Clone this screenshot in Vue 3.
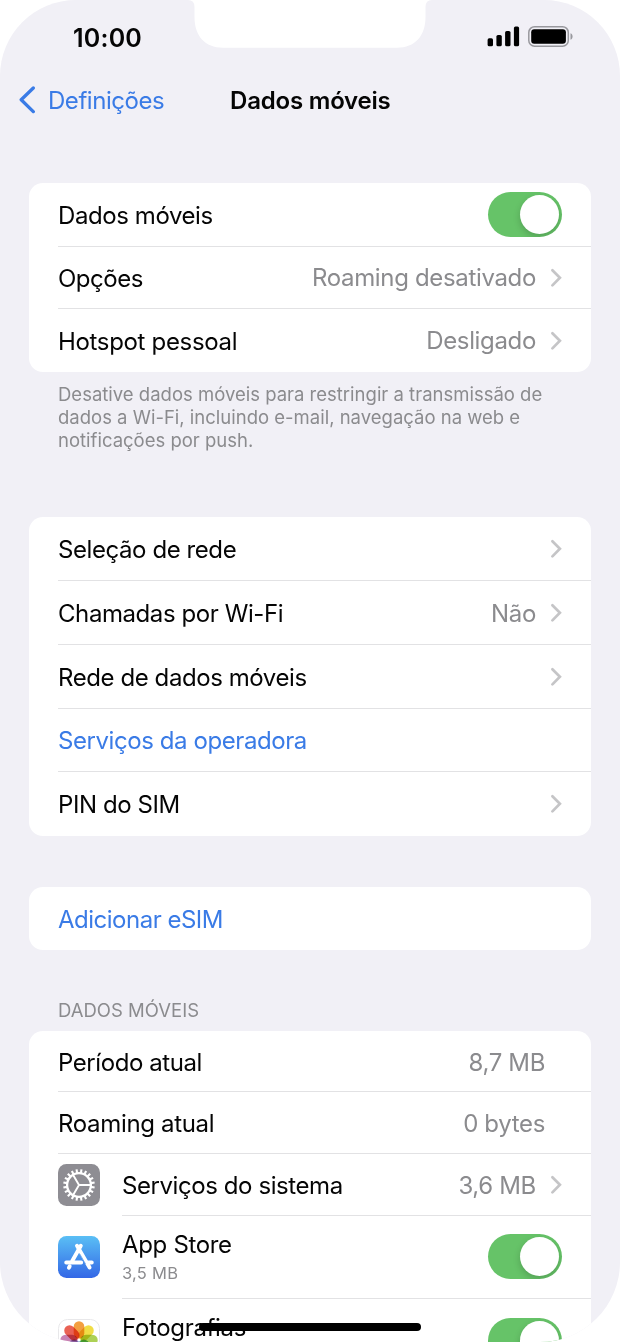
<script setup>
const connection = [
  { label: 'Dados móveis', toggle: true, size: 'h64', fit: 'snug' },
  { label: 'Opções', value: 'Roaming desativado', chevron: true, size: 'h62', fit: 'tight' },
  { label: 'Hotspot pessoal', value: 'Desligado', chevron: true, size: 'h63', fit: 'loose' },
]
const network = [
  { label: 'Seleção de rede', chevron: true, size: 'h64', fit: 'snug' },
  { label: 'Chamadas por Wi-Fi', value: 'Não', chevron: true, size: 'h64', fit: 'snug' },
  { label: 'Rede de dados móveis', chevron: true, size: 'h64', fit: 'snug' },
  { label: 'Serviços da operadora', link: true, size: 'h63', fit: 'snug' },
  { label: 'PIN do SIM', chevron: true, size: 'h64', fit: 'snug' },
]
const esim = [{ label: 'Adicionar eSIM', link: true, size: 'h63', fit: 'tight' }]
const usage = [
  { label: 'Período atual', value: '8,7 MB', size: 'h61', fit: 'snug' },
  { label: 'Roaming atual', value: '0 bytes', size: 'h62', fit: 'loose' },
  { label: 'Serviços do sistema', value: '3,6 MB', chevron: true, icon: 'gear', size: 'h62', fit: 'snug' },
  { label: 'App Store', sub: '3,5 MB', toggle: true, icon: 'store', size: 'h83', fit: 'loose' },
  { label: 'Fotografias', toggle: true, icon: 'photos', size: 'h83', fit: 'loose' },
]
const sections = [
  { id: 'connection', rows: connection, note: ['Desative dados móveis para restringir a transmissão de', 'dados a Wi-Fi, incluindo e-mail, navegação na web e', 'notificações por push.'] },
  { id: 'network', rows: network },
  { id: 'esim', rows: esim },
  { id: 'usage', rows: usage, title: 'DADOS MÓVEIS' },
]
const teeth = Array.from({ length: 20 }, (_, i) => i * 18)
const petals = ['#f39a35', '#f0dc3c', '#a9cf4c', '#5fb98a', '#6a9fd8', '#8f7fc4', '#c67bb0', '#e8584b']
</script>

<template>
  <main class="screen">
    <div class="notch">
      <svg width="250" height="48" viewBox="0 0 250 48"><path d="M3 0Q9.500 0 9.500 7V17C9.500 36 20 47.700 38 47.700H212C230 47.700 240.500 36 240.500 17V7Q240.500 0 247 0Z" fill="#fff" /></svg>
    </div>
    <header class="status">
      <span class="time">10:00</span>
      <svg class="indicators" width="90" height="24" viewBox="0 0 90 24">
        <rect x="0.600" y="14.300" width="5.400" height="8" rx="1.600" />
        <rect x="9.400" y="11" width="5.400" height="11.300" rx="1.600" />
        <rect x="18.100" y="7" width="5.400" height="15.300" rx="1.600" />
        <rect x="26.900" y="2.500" width="5.200" height="19.800" rx="1.600" />
        <rect x="41.800" y="2.700" width="39.500" height="19.500" rx="5.800" fill="none" stroke="#98989d" stroke-width="1.500" />
        <rect x="44.200" y="5.200" width="34.700" height="14.500" rx="3" />
        <path d="M83.500 9.200C86.300 10.400 86.300 14.600 83.500 15.800Z" fill="#98989d" />
      </svg>
    </header>
    <nav class="nav">
      <svg width="18" height="30" viewBox="0 0 18 30"><path d="M16.300 3L4.200 14.800L16.300 26.600" fill="none" stroke="#3a7be6" stroke-width="3.300" stroke-linecap="round" stroke-linejoin="round" /></svg>
      <span class="back">Definições</span>
      <h1>Dados móveis</h1>
    </nav>

    <section v-for="s in sections" :key="s.id" :class="['section', s.id]">
      <h2 v-if="s.title">{{ s.title }}</h2>
      <div class="card">
        <div v-for="r in s.rows" :key="r.label" :class="['row', r.size]">
          <span v-if="r.icon" :class="['icon', r.icon]">
            <svg v-if="r.icon === 'gear'" width="42" height="42" viewBox="0 0 42 42" fill="none" stroke="#fff">
              <rect width="42" height="42" rx="8.500" fill="#8e8d93" stroke="none" />
              <circle cx="21" cy="21" r="11.900" stroke-width="2.300" />
              <path v-for="a in teeth" :key="a" d="M21 5.200V9" stroke-width="2.100" :transform="`rotate(${a + 9} 21 21)`" />
              <path d="M21 21H33M21 21L15 10.800M21 21L15 31.200" stroke-width="1.900" />
            </svg>
            <svg v-else-if="r.icon === 'store'" width="42" height="42" viewBox="0 0 42 42">
              <defs><linearGradient id="sky" x1="0" y1="0" x2="0" y2="1"><stop offset="0" stop-color="#5abff5" /><stop offset="1" stop-color="#3367e6" /></linearGradient></defs>
              <rect width="42" height="42" rx="8.500" fill="url(#sky)" />
              <g fill="none" stroke="#fff" stroke-linecap="round" stroke-width="3.900">
                <path d="M22.800 9.800L14.200 25" />
                <path d="M19 9.800L31.600 31.500" />
                <path d="M8.200 26.500H23.200M30.500 26.500H33.800" />
                <path d="M11.700 30.300L10.900 31.700" />
              </g>
              <path d="M21.500 17.500L27.500 28" stroke="#418be9" stroke-width="0.700" />
            </svg>
            <svg v-else width="42" height="42" viewBox="0 0 42 42">
              <rect x="0.500" y="0.500" width="41" height="41" rx="9" fill="#fff" stroke="#e8e8ea" />
              <g class="petals"><rect v-for="(c, i) in petals" :key="c" x="15.700" y="2.300" width="10.600" height="17.200" rx="5.300" :fill="c" :transform="`rotate(${i * 45} 21 21)`" /></g>
            </svg>
          </span>
          <div class="body">
            <div :class="['text', { lifted: r.icon === 'photos' }]">
              <span :class="['label', r.fit, { link: r.link }]">{{ r.label }}</span>
              <span v-if="r.sub" class="sub">{{ r.sub }}</span>
            </div>
            <span v-if="r.value" :class="['value', { flush: !r.chevron }]">{{ r.value }}</span>
            <svg v-if="r.chevron" class="chevron" width="13" height="20" viewBox="0 0 13 20"><path d="M3.400 2.200L10.900 9.800L3.400 17.400" fill="none" stroke="#c5c5c7" stroke-width="2.700" stroke-linecap="round" stroke-linejoin="miter" /></svg>
            <span v-if="r.toggle" class="toggle"><i></i></span>
          </div>
        </div>
      </div>
      <p v-if="s.note" class="note"><span v-for="line in s.note" :key="line">{{ line }}</span></p>
    </section>
    <div class="home"></div>
  </main>
</template>

<style>
body { margin: 0; background: #fff; }
</style>

<style scoped>
.screen { position: relative; width: 620px; height: 1342px; overflow: hidden; box-sizing: border-box; background: #f1f0f6; border-radius: 76px 76px 80px 80px; font-family: Inter, "Liberation Sans", sans-serif; font-size: 24px; color: #050505; white-space: nowrap; }
.notch { position: absolute; top: 0; left: 185px; height: 48px; }
.notch svg { display: block; }
.status { display: flex; justify-content: space-between; height: 75px; padding: 0 48px 0 73px; }
.time { font-size: 25px; line-height: 30px; padding-top: 23px; font-weight: 600; letter-spacing: .2px; }
.indicators { margin-top: 24px; margin-right: -5px; }
.nav { display: flex; align-items: center; height: 50px; padding-left: 17px; }
.back { width: 182px; margin-left: 13px; color: #3a7be6; font-size: 24px; letter-spacing: -.45px; }
h1 { margin: 0; font-size: 24px; font-weight: 600; letter-spacing: -.2px; }
.section { padding: 0 29px; }
.connection { padding-top: 58px; }
.network { padding-top: 65px; }
.esim { padding-top: 51px; }
.usage { padding-top: 48px; }
.card { background: #fff; border-radius: 14px; overflow: hidden; }
.row { display: flex; align-items: stretch; padding-left: 29px; box-sizing: border-box; }
.h61 { height: 61px; }
.h62 { height: 62px; }
.h63 { height: 63px; }
.h64 { height: 64px; }
.h83 { height: 83px; }
.h83 .body, .h83 .icon { box-sizing: border-box; padding-bottom: 1px; }
.body { flex: 1; display: flex; align-items: center; padding-right: 29px; border-bottom: 1px solid #e2e2e4; }
.row:last-child .body { border-bottom: 0; }
.text { flex: 1; display: flex; flex-direction: column; padding-top: 2px; }
.network .value { padding-top: 2px; }
.h83 .text { padding-top: 0; }
.h83 .lifted { padding: 0 0 25px; }
.label { align-self: flex-start; line-height: 30px; }
.snug { letter-spacing: -.42px; }
.tight { letter-spacing: -.5px; }
.loose { letter-spacing: -.33px; }
.link { color: #3a7be6; }
.value { color: #8b8b8e; line-height: 30px; padding-top: 1px; margin-right: 13px; letter-spacing: -.34px; }
.usage .row:nth-child(-n+2) .text, .usage .row:nth-child(-n+3) .value { padding-top: 3px; }
.usage .row:nth-child(3) .text { padding-top: 3px; }
.value.flush { margin-right: 17px; }
.sub { color: #8b8b8e; font-size: 16.500px; line-height: 22px; margin-top: 2px; letter-spacing: .25px; }
.toggle { width: 74px; height: 45px; border-radius: 23px; background: #66c368; overflow: hidden; }
.toggle i { display: block; width: 39px; height: 39px; margin: 3px 0 0 32px; border-radius: 50%; background: #fff; box-shadow: 0 3px 7px rgba(0, 0, 0, .18); }
.icon { width: 64px; display: flex; align-items: center; }
.store { padding-bottom: 2px !important; }
.icon svg { display: block; }
.petals rect { mix-blend-mode: multiply; opacity: .95; }
.note { display: flex; flex-direction: column; margin: 11px 0 0 29px; font-size: 18.500px; line-height: 23px; color: #8b8b8e; }
h2 { margin: 0 0 9px 29px; font-size: 18.500px; line-height: 24px; font-weight: 400; color: #8b8b8e; }
.home { position: absolute; left: 199px; top: 1323px; width: 222px; height: 8px; border-radius: 4px; background: #000; }
</style>
